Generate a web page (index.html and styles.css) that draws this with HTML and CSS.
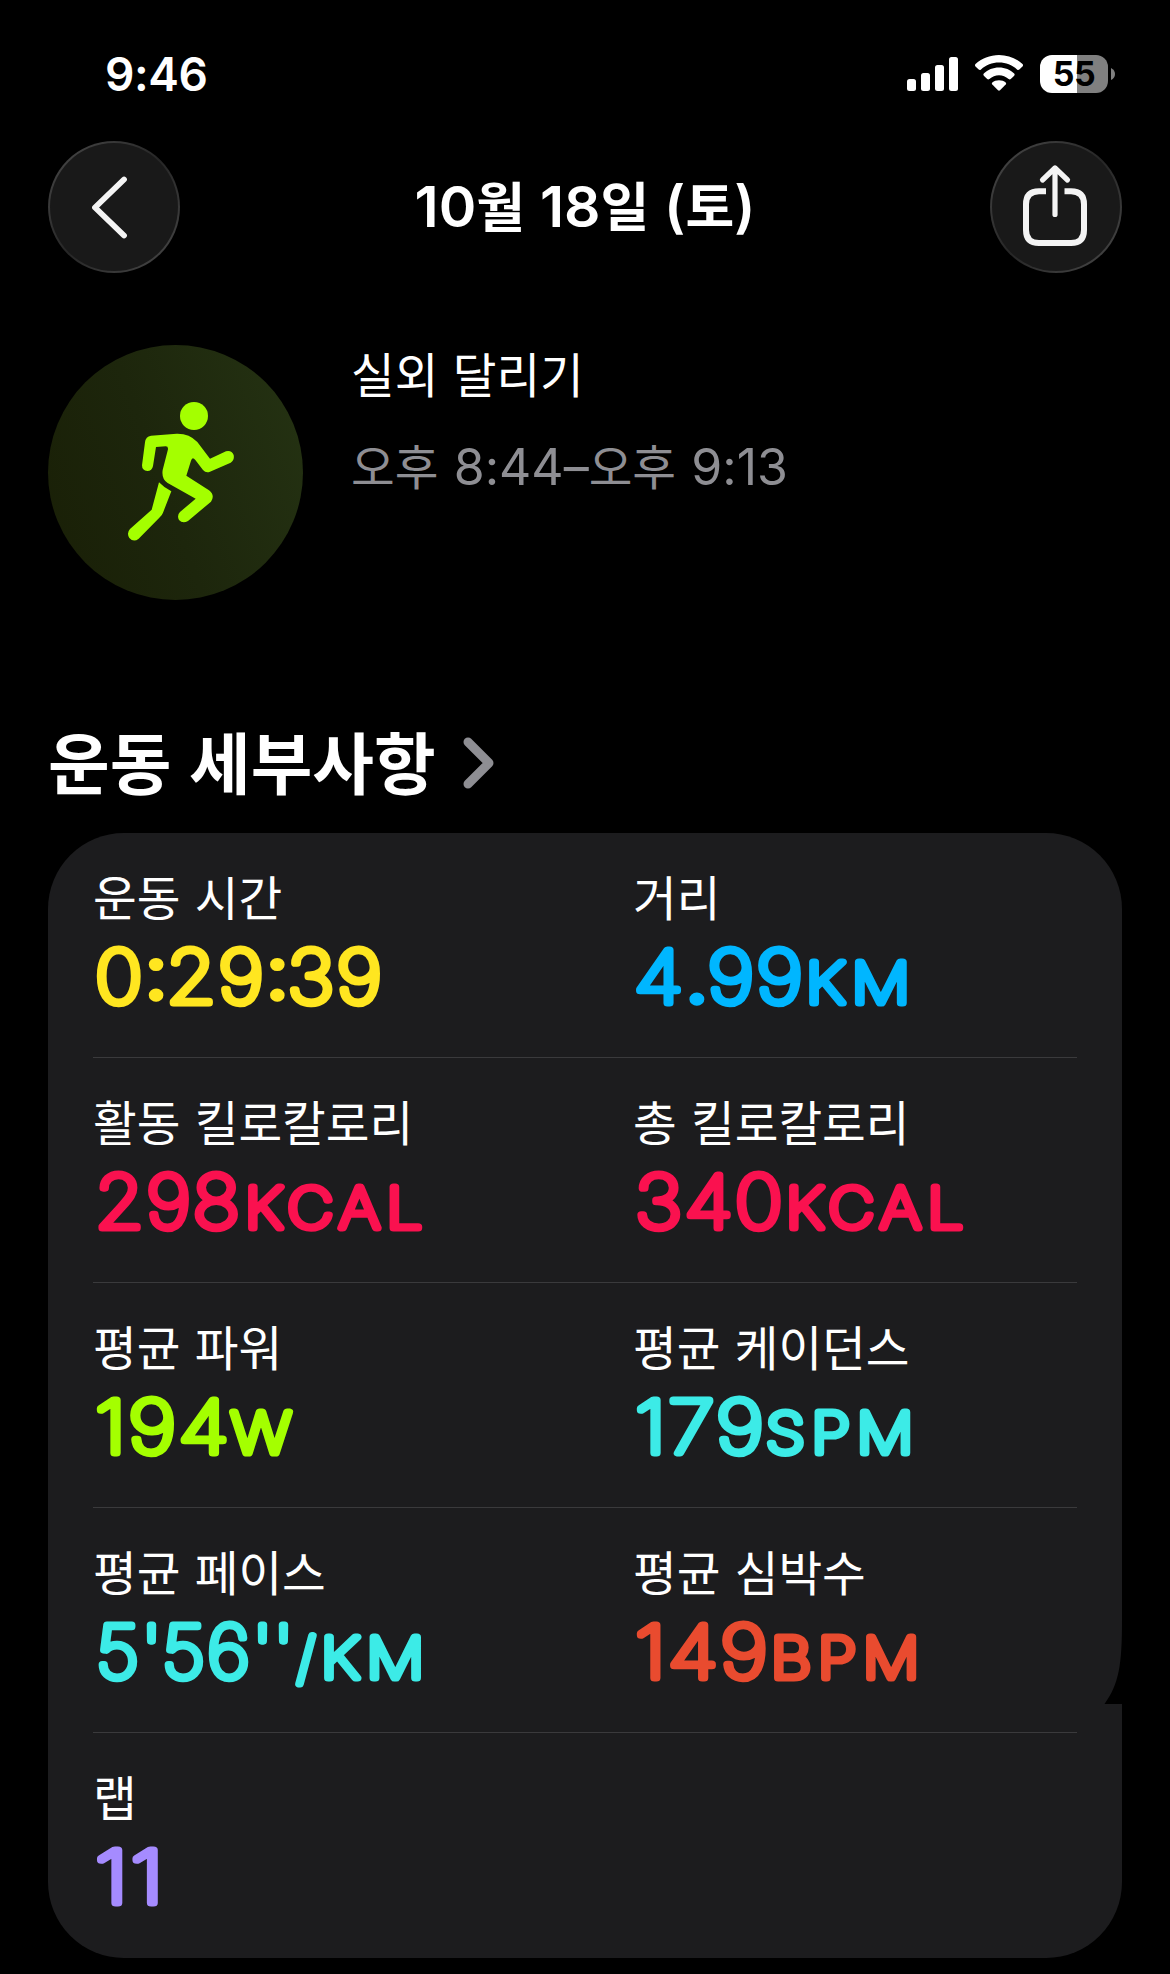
FILE: index.html
```html
<!DOCTYPE html>
<html lang="ko">
  <head>
    <meta charset="utf-8"/>
    <title>10월 18일 (토)</title>
    <link rel="stylesheet" href="styles.css">
  </head>
  <body>
    <div class="statusbar">
      <span class="time">9:46</span>
      <div class="indicators">
        <svg class="signal" viewBox="0 0 51 34">
          <rect x="0" y="22" width="9" height="12" rx="2.5"/>
          <rect x="14" y="16" width="9" height="18" rx="2.5"/>
          <rect x="28" y="8" width="9" height="26" rx="2.5"/>
          <rect x="42" y="0" width="9" height="34" rx="2.5"/>
        </svg>
        <svg class="wifi" viewBox="0 0 48 36">
          <path d="M24 0C33 0 41.500 3.500 47.500 9Q48.600 10.200 47.500 11.400L44.300 14.600Q43.200 15.500 42 14.500C37 10 31 7.600 24 7.600S11 10 6 14.500Q4.800 15.500 3.700 14.600L.5 11.400Q-.6 10.200 .5 9C6.500 3.500 15 0 24 0Z"/>
          <path d="M24 12.500C30 12.500 35.300 14.800 39.200 18.500Q40.200 19.600 39.200 20.700L35.800 24Q34.800 24.900 33.600 24C30.800 21.600 27.600 20.200 24 20.200S17.200 21.600 14.400 24Q13.200 24.900 12.200 24L8.800 20.700Q7.800 19.600 8.800 18.500C12.700 14.800 18 12.500 24 12.500Z"/>
          <path d="M24 25.200C26.700 25.200 29 26 30.700 27.500Q31.600 28.500 30.700 29.500L25 35.300Q24 36.200 23 35.300L17.300 29.500Q16.400 28.500 17.300 27.500C19 26 21.300 25.200 24 25.200Z"/>
        </svg>
        <div class="battery">
          <span class="battery-level">55</span>
          <svg class="battery-cap" viewBox="0 0 4 12"><path d="M0 0Q4 2 4 6T0 12Z"/></svg>
        </div>
      </div>
    </div>

    <div class="navbar">
      <div class="round-button">
        <svg viewBox="0 0 132 132"><path d="M76 38.500L47 66.500L76 94.500" stroke-width="5.800"/></svg>
      </div>
      <h1><span class="latin">10</span>월 <span class="latin">18</span>일 <span class="latin">(</span>토<span class="latin">)</span></h1>
      <div class="round-button">
        <svg viewBox="0 0 132 132">
          <path d="M56 50.300H49Q36 50.300 36 63.300V89Q36 102 49 102H81Q94 102 94 89V63.300Q94 50.300 81 50.300H74.500" stroke-width="6" stroke-linecap="butt"/>
          <path d="M65 73.500V27M52.500 39L65 27L77.500 39" stroke-width="5.200"/>
        </svg>
      </div>
    </div>

    <div class="summary">
      <div class="activity">
        <svg viewBox="54 45 765 765">
          <circle cx="492" cy="258" r="42"/>
          <path d="M363 317L440 311Q478 310 502 336L540 386L588 364Q605 360 611 375Q614 390 602 398L540 425Q528 430 519 420L496 390Q487 378 483 392L469 437L537 481Q556 496 543 515L474 573Q458 582 447 570Q440 556 450 546L497 506L413 459Q394 447 398 420L414 358Q415 349 407 349L378 351L369 408Q366 423 352 423Q336 422 336 406L345 337Q347 319 363 317Z"/>
          <path d="M387 457Q402 473 424 484L399 548Q397 555 388 563L326 626Q311 638 298 624Q289 609 300 597L365 539Z"/>
        </svg>
      </div>
      <div class="summary-text">
        <p class="name">실외 달리기</p>
        <p class="period">오후 <span class="latin">8:44–</span>오후 <span class="latin">9:13</span></p>
      </div>
    </div>

    <h2>운동 세부사항
      <svg class="more" viewBox="0 0 31 52"><path d="M5 5L26 26L5 47"/></svg>
    </h2>

    <div class="card">
      <div class="row">
        <div class="cell">
          <p>운동 시간</p>
          <svg class="value yellow" viewBox="0 0 500 132"><text x="2" y="78" textLength="289" lengthAdjust="spacingAndGlyphs">0<tspan class="dot" dy="-4.500">:</tspan><tspan dy="4.500">29</tspan><tspan class="dot" dy="-4.500">:</tspan><tspan dy="4.500">39</tspan></text></svg>
        </div>
        <div class="cell">
          <p>거리</p>
          <svg class="value blue" viewBox="0 0 500 132"><text x="1" y="78" textLength="171" lengthAdjust="spacingAndGlyphs">4<tspan class="dot">.</tspan>99</text><text class="unit" x="173" y="78" textLength="111" lengthAdjust="spacingAndGlyphs">KM</text></svg>
        </div>
      </div>
      <div class="row">
        <div class="cell">
          <p>활동 킬로칼로리</p>
          <svg class="value red" viewBox="0 0 500 132"><text x="2" y="78" textLength="147" lengthAdjust="spacingAndGlyphs">298</text><text class="unit" x="152" y="78" textLength="184" lengthAdjust="spacingAndGlyphs">KCAL</text></svg>
        </div>
        <div class="cell">
          <p>총 킬로칼로리</p>
          <svg class="value red" viewBox="0 0 500 132"><text x="2" y="78" textLength="150" lengthAdjust="spacingAndGlyphs">340</text><text class="unit" x="153" y="78" textLength="184" lengthAdjust="spacingAndGlyphs">KCAL</text></svg>
        </div>
      </div>
      <div class="row">
        <div class="cell">
          <p>평균 파워</p>
          <svg class="value green" viewBox="0 0 500 132"><text x="2" y="78" textLength="136" lengthAdjust="spacingAndGlyphs">194</text><text class="unit" x="138" y="78" textLength="67" lengthAdjust="spacingAndGlyphs">W</text></svg>
        </div>
        <div class="cell">
          <p>평균 케이던스</p>
          <svg class="value cyan" viewBox="0 0 500 132"><text x="2" y="78" textLength="131" lengthAdjust="spacingAndGlyphs">179</text><text class="unit" x="133" y="78" textLength="154" lengthAdjust="spacingAndGlyphs">SPM</text></svg>
        </div>
      </div>
      <div class="row">
        <div class="cell">
          <p>평균 페이스</p>
          <svg class="value cyan" viewBox="0 0 500 132"><text x="3" y="78" textLength="198" lengthAdjust="spacingAndGlyphs">5<tspan class="prime">'</tspan>56<tspan class="prime">''</tspan></text><text class="unit" x="204" y="78">/</text><text class="unit" x="228" y="78" textLength="110" lengthAdjust="spacingAndGlyphs">KM</text></svg>
        </div>
        <div class="cell">
          <p>평균 심박수</p>
          <svg class="value orange" viewBox="0 0 500 132"><text x="2" y="78" textLength="135" lengthAdjust="spacingAndGlyphs">149</text><text class="unit" x="138" y="78" textLength="155" lengthAdjust="spacingAndGlyphs">BPM</text></svg>
        </div>
      </div>
      <div class="row">
        <div class="cell">
          <p>랩</p>
          <svg class="value purple" viewBox="0 0 500 132"><text x="2" y="78" textLength="71" lengthAdjust="spacingAndGlyphs">11</text></svg>
        </div>
      </div>
      <svg class="notch" viewBox="0 0 18 84"><path d="M18 0C18 45 15 64 .5 84H18Z"/></svg>
    </div>
  </body>
</html>
```
FILE: styles.css
```css
* {
  margin: 0;
  padding: 0;
  box-sizing: border-box;
}

body {
  width: 1170px;
  height: 1974px;
  padding: 0 48px;
  overflow: hidden;
  background: #000;
  color: #fff;
  font-family: 'Noto Sans CJK KR', sans-serif;
}

svg {
  display: block;
}

.latin {
  font-family: Inter, sans-serif;
}

.statusbar {
  display: flex;
  justify-content: space-between;
  height: 141px;
  padding: 44px 7px 0 57px;
}

.time {
  font-family: Inter, sans-serif;
  font-size: 46px;
  font-weight: 600;
  line-height: 61px;
  letter-spacing: -0.4px;
}

.indicators {
  display: flex;
  align-items: flex-start;
  padding-top: 11px;
  fill: #fff;
}

.signal {
  width: 51px;
  height: 34px;
  margin: 2px 17px 0 0;
}

.wifi {
  width: 48px;
  height: 36px;
  margin-right: 17px;
}

.battery {
  display: flex;
  align-items: center;
  gap: 3px;
}

.battery-level {
  width: 68px;
  height: 38px;
  border-radius: 12px;
  background: linear-gradient(90deg, #fff 37px, #808080 37px);
  color: #000;
  font-family: Inter, sans-serif;
  font-size: 34px;
  font-weight: 700;
  line-height: 38px;
  letter-spacing: -0.5px;
  text-align: center;
}

.battery-cap {
  width: 4px;
  height: 12px;
  fill: #808080;
}

.navbar {
  display: flex;
  justify-content: space-between;
  height: 132px;
}

.round-button {
  width: 132px;
  height: 132px;
  border: 2px solid transparent;
  border-radius: 50%;
  background: linear-gradient(#191919, #191919) padding-box, linear-gradient(135deg, #4a4a4a, #262626 50%, #4a4a4a) border-box;
}

.round-button svg {
  width: 132px;
  height: 132px;
  margin: -2px;
  fill: none;
  stroke: #f4f4f4;
  stroke-linecap: round;
  stroke-linejoin: round;
}

h1 {
  font-size: 53px;
  font-weight: 700;
  line-height: 127px;
  white-space: nowrap;
}

h1 .latin {
  font-size: 57px;
  font-weight: 600;
}

.summary {
  display: flex;
  height: 383px;
  padding-top: 72px;
}

.activity {
  width: 255px;
  height: 255px;
  margin-right: 48px;
  border-radius: 50%;
  background: linear-gradient(70deg, #191f06, #1d260c 45%, #253313);
  fill: #a4ff00;
}

.summary-text {
  margin-top: -2px;
}

.name,
.period {
  font-size: 47.5px;
  line-height: 60px;
  word-spacing: 1px;
}

.period {
  margin-top: 32px;
  color: #8e8e93;
  word-spacing: 2px;
}

.period .latin {
  font-size: 50px;
}

h2 {
  display: flex;
  align-items: center;
  gap: 27px;
  height: 177px;
  padding-top: 30px;
  font-size: 67px;
  line-height: 100px;
  font-weight: 700;
  word-spacing: -1px;
}

.more {
  width: 31px;
  height: 52px;
  margin-top: 6px;
  fill: none;
  stroke: #8e8e93;
  stroke-width: 9;
  stroke-linecap: round;
  stroke-linejoin: round;
}

.card {
  position: relative;
  height: 1125px;
  padding: 0 45px;
  border-radius: 76px;
  background: #1c1c1e;
}

.row {
  display: grid;
  grid-template-columns: 540px 1fr;
  height: 225px;
  border-bottom: 1px solid #3a3a3c;
}

.row:nth-child(5) {
  border-bottom: 0;
}

.cell {
  padding-top: 33px;
}

.cell p {
  height: 59px;
  font-size: 47.5px;
  line-height: 60px;
  word-spacing: 1px;
}

.value {
  width: 500px;
  height: 132px;
  margin-right: -60px;
  fill: currentColor;
  stroke: currentColor;
  stroke-width: 7.2px;
  stroke-linejoin: round;
  font-family: Inter, sans-serif;
  font-size: 73px;
  font-weight: 100;
  letter-spacing: 2px;
}

.value .unit {
  font-size: 55.5px;
  letter-spacing: 6px;
}

.value .dot {
  font-weight: 300;
  stroke-width: 5.5px;
  letter-spacing: -1px;
}

.value .prime {
  letter-spacing: 0;
}

.yellow { color: #ffe620; }
.blue { color: #00b6ff; }
.red { color: #fa114f; }
.green { color: #a4ff00; }
.cyan { color: #3cebe7; }
.orange { color: #e94b2f; }
.purple { color: #a58bff; }

/* end of the shorter panel underneath */
.notch {
  position: absolute;
  top: 787px;
  right: 0;
  width: 18px;
  height: 84px;
  fill: #000;
}
```
